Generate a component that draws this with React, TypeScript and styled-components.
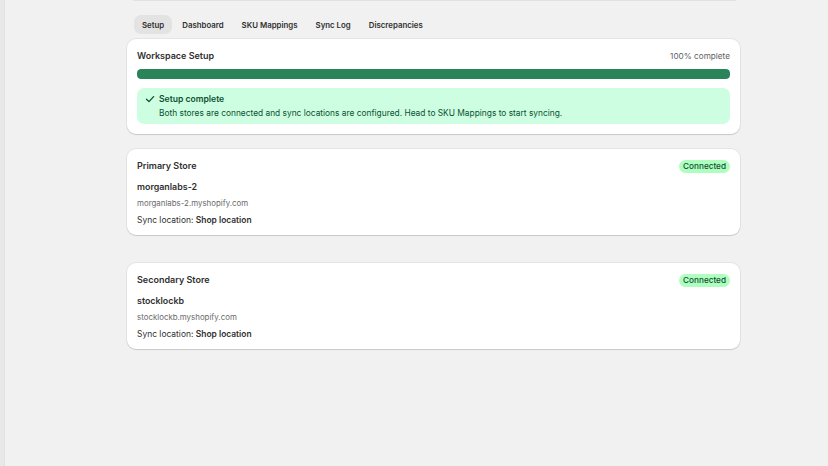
import { createGlobalStyle } from "styled-components"
import styled from "styled-components"

const GlobalStyle = createGlobalStyle`
  html, body {
    margin: 0;
    padding: 0;
    background: #f1f1f1;
    font-family: Inter, "Noto Sans", "Liberation Sans", sans-serif;
    color: #303030;
    -webkit-font-smoothing: antialiased;
  }
`

const Page = styled.div`
  display: flex;
  min-height: 466px;
`

const Rail = styled.div`
  width: 4px;
  flex: none;
  background: #e8e8e8;
  border-right: 1px solid #e2e2e2;
`

const Main = styled.div`
  flex: 1;
  padding-left: 122px;
`

const Column = styled.div`
  width: 613px;
  display: flex;
  flex-direction: column;
`

const TopEdge = styled.div`
  height: 1px;
  margin: 0 4px 0 6px;
  background: #e1e1e1;
`

const Tabs = styled.nav`
  display: flex;
  gap: 2px;
  margin: 14px 0 5px 7px;
`

const Tab = styled.button<{ $active?: boolean }>`
  font-family: inherit;
  font-size: 7.85px;
  font-weight: 600;
  color: #303030;
  height: 19px;
  padding: 0 8px;
  border: 0;
  border-radius: 7px;
  background: ${(p) => (p.$active ? "#e3e3e3" : "transparent")};
  cursor: pointer;
`

const Card = styled.section<{ $gap?: number; $bottom?: number }>`
  background: #fff;
  border-radius: 9px;
  padding: 11px 10px ${(p) => p.$bottom ?? 10}px;
  margin-bottom: ${(p) => p.$gap ?? 15}px;
  box-shadow: 0 1px 1px rgba(0, 0, 0, 0.12), 0 0 0 1px rgba(0, 0, 0, 0.05);
`

const HeadRow = styled.div`
  display: flex;
  align-items: center;
  justify-content: space-between;
  height: 12px;
`

const Title = styled.h2`
  margin: 0;
  font-size: 9px;
  font-weight: 600;
  line-height: 12px;
`

const Muted = styled.span`
  font-size: 8.2px;
  color: #616161;
`

const Bar = styled.div`
  height: 10px;
  margin-top: 7px;
  border-radius: 4px;
  background: #e3e3e3;
  overflow: hidden;
`

const Fill = styled.div`
  height: 100%;
  background: #29845a;
  border-radius: 4px;
`

const Banner = styled.div`
  margin-top: 9px;
  background: #cdfee1;
  border-radius: 7px;
  padding: 4px 10px 4px 8px;
  display: flex;
  gap: 4px;
  color: #0c5132;
`

const Check = styled.svg`
  width: 10px;
  height: 14px;
  flex: none;
`

const BannerTitle = styled.div`
  font-size: 8.6px;
  font-weight: 600;
  line-height: 14px;
`

const BannerText = styled.div`
  font-size: 8.37px;
  line-height: 14px;
`

const Badge = styled.span`
  font-size: 8.2px;
  font-weight: 500;
  line-height: 13px;
  padding: 0 4px;
  border-radius: 7px;
  background: #affebf;
  color: #0c5132;
`

const StoreName = styled.div`
  margin-top: 9px;
  font-size: 8.9px;
  font-weight: 600;
  line-height: 12px;
`

const Domain = styled.div`
  margin-top: 4px;
  font-size: 7.9px;
  line-height: 12px;
  color: #6b6b6b;
`

const SyncLine = styled.div`
  margin-top: 5px;
  font-size: 8.45px;
  line-height: 12px;

  b {
    font-weight: 600;
  }
`

const tabs = ["Setup", "Dashboard", "SKU Mappings", "Sync Log", "Discrepancies"]

const stores = [
  { label: "Primary Store", name: "morganlabs-2", domain: "morganlabs-2.myshopify.com", gap: 28 },
  { label: "Secondary Store", name: "stocklockb", domain: "stocklockb.myshopify.com", gap: 15 },
]

export default function App() {
  return (
    <>
      <GlobalStyle />
      <Page>
        <Rail />
        <Main>
          <Column>
            <TopEdge />
            <Tabs>
              {tabs.map((t) => (
                <Tab key={t} $active={t === "Setup"}>
                  {t}
                </Tab>
              ))}
            </Tabs>

            <Card>
              <HeadRow>
                <Title>Workspace Setup</Title>
                <Muted>100% complete</Muted>
              </HeadRow>
              <Bar>
                <Fill style={{ width: "100%" }} />
              </Bar>
              <Banner>
                <Check viewBox="0 0 10 14">
                  <path d="M1.5 7.2 L4 9.6 L8.6 4.6" fill="none" stroke="#0c5132" strokeWidth="1.3" strokeLinecap="round" strokeLinejoin="round" />
                </Check>
                <div>
                  <BannerTitle>Setup complete</BannerTitle>
                  <BannerText>
                    Both stores are connected and sync locations are configured. Head to SKU Mappings to start syncing.
                  </BannerText>
                </div>
              </Banner>
            </Card>

            {stores.map((s) => (
              <Card key={s.label} $gap={s.gap} $bottom={9}>
                <HeadRow>
                  <Title>{s.label}</Title>
                  <Badge>Connected</Badge>
                </HeadRow>
                <StoreName>{s.name}</StoreName>
                <Domain>{s.domain}</Domain>
                <SyncLine>
                  Sync location: <b>Shop location</b>
                </SyncLine>
              </Card>
            ))}
          </Column>
        </Main>
      </Page>
    </>
  )
}
